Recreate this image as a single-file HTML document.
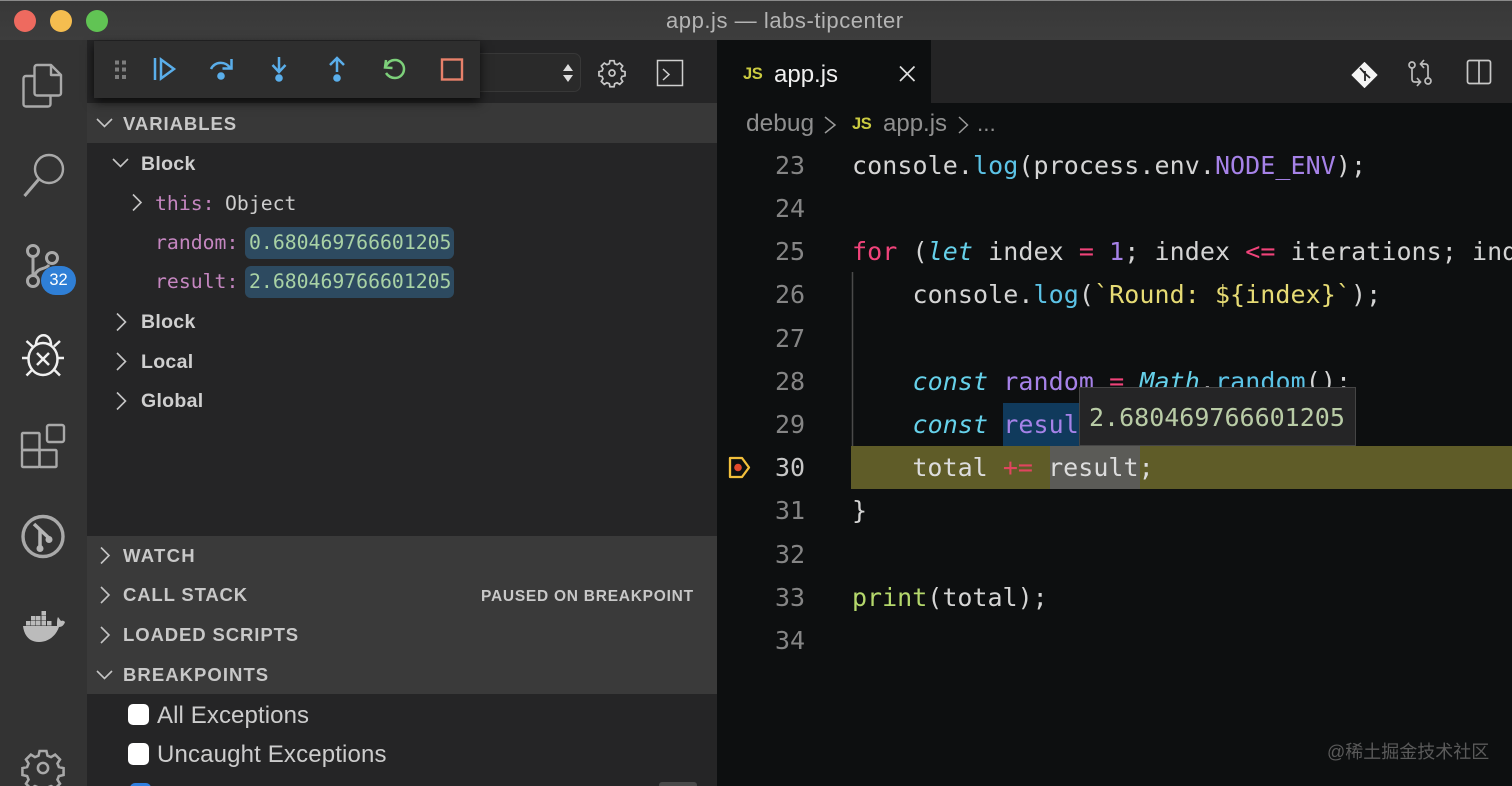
<!DOCTYPE html>
<html><head><meta charset="utf-8"><style>
html,body{margin:0;padding:0;width:1512px;height:786px;overflow:hidden;background:#0d0f10}
#w{position:relative;width:1512px;height:786px;overflow:hidden}
.a{position:absolute}
.u{position:absolute;font-family:"Liberation Sans",sans-serif;white-space:pre;line-height:24px}
.m{position:absolute;font-family:"DejaVu Sans Mono","Liberation Mono",monospace;white-space:pre}
.h{font-weight:bold;font-size:18.5px;color:#c8c8c8;letter-spacing:.95px}
.b{font-weight:bold;font-size:19.5px;color:#cfcfcf;letter-spacing:.3px}
.c{font-size:25px;line-height:43px;left:852px;color:#d4d4d4;letter-spacing:.07px}
.n{font-size:25px;line-height:43px;left:775px;color:#858585}
.v{font-size:19.8px;line-height:28px}
.pk{color:#c586c0}.hl{position:absolute;background:#2d4a60;border-radius:6px;width:209px;height:32px;left:245px}
.k{color:#f0437a}.cy{color:#66d1ea;font-style:italic}.f{color:#5cc3e6}.p{color:#a682e8}.y{color:#e6db74}.g{color:#b5d86c}
svg{position:absolute;overflow:visible}
</style></head><body><div id="w">
<div class="a" style="left:0;top:0;width:1512px;height:40px;background:linear-gradient(#383838,#3d3d3d);border-top:1px solid #8a8a8a;box-sizing:border-box"></div>
<div class="a" style="left:14px;top:10px;width:22px;height:22px;border-radius:50%;background:#ee6a5f"></div>
<div class="a" style="left:50px;top:10px;width:22px;height:22px;border-radius:50%;background:#f5bd4f"></div>
<div class="a" style="left:86px;top:10px;width:22px;height:22px;border-radius:50%;background:#61c454"></div>
<div class="u" style="left:666px;top:9px;font-size:22px;letter-spacing:.55px;color:#b4b4b4">app.js — labs-tipcenter</div>

<!-- activity bar -->
<div class="a" style="left:0;top:40px;width:87px;height:746px;background:#333"></div>
<!-- sidebar -->
<div class="a" style="left:87px;top:40px;width:630px;height:746px;background:#252526"></div>
<div class="a" style="left:87px;top:103px;width:630px;height:40px;background:#383838"></div>
<div class="a" style="left:87px;top:536px;width:630px;height:158px;background:#3a3a3a"></div>
<!-- select -->
<div class="a" style="left:400px;top:53px;width:181px;height:39px;box-sizing:border-box;border:1.5px solid #383838;border-radius:7px;background:#2a2a2a"></div>
<svg style="left:0;top:0" width="1512" height="786" fill="none">
 <path d="M563 71l5-7 5 7zM563 75l5 7 5-7z" fill="#ddd"/>
 <!-- sidebar gear -->
 <g transform="translate(612 73) scale(.82)" stroke="#c8c8c8" stroke-width="2.100">
  <circle r="3.600"/>
  <path d="M-2.500-15h5l.8 3.700 2.900 1.200 3.200-2 3.600 3.600-2 3.200 1.200 2.900 3.700.8v5l-3.700.8-1.200 2.900 2 3.200-3.600 3.600-3.200-2-2.900 1.200-.8 3.700h-5l-.8-3.700-2.900-1.200-3.200 2-3.600-3.600 2-3.200-1.200-2.900-3.700-.8v-5l3.700-.8 1.200-2.900-2-3.200 3.600-3.600 3.200 2 2.900-1.200z"/>
 </g>
 <rect x="657.500" y="60.500" width="25" height="25" stroke="#d0d0d0" stroke-width="1.500"/>
 <path d="M663 69l6 5.500-6 5.500" stroke="#d0d0d0" stroke-width="1.500"/>

 <!-- activity icons -->
 <g stroke="#a9a9a9" stroke-width="2.400" stroke-linejoin="round">
  <path d="M37 65h14l10 10v18c0 1.500-1 2.500-2.500 2.500H37c-1.500 0-2.500-1-2.500-2.500V67.500c0-1.500 1-2.500 2.500-2.500z"/><path d="M51 65v10h10"/>
  <path d="M34.500 76H26c-1.500 0-2.500 1-2.500 2.500v25.500c0 1.500 1 2.500 2.500 2.500h22c1.500 0 2.500-1 2.500-2.500V95.500"/>
  <circle cx="49" cy="169" r="14"/><path d="M39 179l-14.500 17" stroke-width="3"/>
  <g stroke-width="3"><circle cx="33" cy="251" r="5.500"/><circle cx="52" cy="258" r="5.500"/><circle cx="33" cy="281" r="5.500"/>
  <path d="M33 257v18M35 275c3-8 10-5 14-10"/></g>
  <rect x="22" y="433" width="17.500" height="17" rx="1"/><rect x="22" y="450" width="17.500" height="17" rx="1"/><rect x="39.500" y="450" width="17" height="17" rx="1"/><rect x="47" y="425" width="17" height="17" rx="2"/>
  <circle cx="43" cy="536.500" r="20" stroke-width="3.400"/>
 </g>
 <path d="M34 524l16 15" stroke="#b5b5b5" stroke-width="3.500"/><path d="M40 529v19" stroke="#b5b5b5" stroke-width="3.500"/><circle cx="49" cy="539.500" r="3.500" fill="#b5b5b5"/><circle cx="40" cy="548.500" r="3.500" fill="#b5b5b5"/>
 <!-- bug -->
 <g stroke="#f0f0f0" stroke-width="2.500">
  <path d="M36 345c0-13 15-13 15 0"/>
  <ellipse cx="43" cy="359" rx="14.500" ry="16"/>
  <path d="M37 353l12 12M49 353l-12 12"/>
  <path d="M22 358h7M57 358h7M26.500 341l6 5.500M60 341l-6 5.500M26.500 375.500l6-6M60 375.500l-6-6"/>
 </g>
 <!-- docker -->
 <g fill="#bbb">
  <path d="M23 626H57c0-4 0-7 1-9l3 4c2-1 3 0 4 1-1 3-3 5-6 5-3 9-11 15-20 15-10 0-15-7-16-16z"/>
  <rect x="26" y="621" width="4.500" height="4.500"/><rect x="31" y="621" width="4.500" height="4.500"/><rect x="36" y="621" width="4.500" height="4.500"/><rect x="41.500" y="621" width="4.500" height="4.500"/><rect x="47" y="621" width="4.500" height="4.500"/>
  <rect x="31" y="616" width="4.500" height="4.500"/><rect x="36" y="616" width="4.500" height="4.500"/><rect x="41.500" y="616" width="4.500" height="4.500"/><rect x="41.500" y="611" width="4.500" height="4.500"/>
 </g>
 <!-- gear bottom -->
 <g transform="translate(43 768) scale(.85)" stroke="#a9a9a9" stroke-width="3">
  <circle r="6"/>
  <path d="M-4-20h8l1.300 5.500 4.200 1.700 4.800-3 5.700 5.700-3 4.800 1.700 4.200 5.500 1.300v8l-5.500 1.300-1.700 4.200 3 4.800-5.700 5.700-4.800-3-4.200 1.700-1.300 5.500h-8l-1.300-5.500-4.200-1.700-4.800 3-5.700-5.700 3-4.800-1.700-4.200-5.500-1.300v-8l5.500-1.300 1.700-4.200-3-4.800 5.700-5.700 4.800 3 4.200-1.700z"/>
 </g>

 <!-- chevrons -->
 <g stroke="#c5c5c5" stroke-width="1.600">
  <path d="M97 119l7.500 7.500 7.500-7.500"/>
  <path d="M113 159l7.500 7.500 7.500-7.500"/>
  <path d="M133 194.500l8 8-8 8"/>
  <path d="M117 313.500l8.500 8.500-8.500 8.500"/>
  <path d="M117 353l8.500 8.500-8.500 8.500"/>
  <path d="M117 392.500l8.500 8.500-8.500 8.500"/>
  <path d="M101 547.500l8 8-8 8"/>
  <path d="M101 587l8 8-8 8"/>
  <path d="M101 627l8 8-8 8"/>
  <path d="M97 671l7.500 7.500 7.500-7.500"/>
 </g>
</svg>
<div class="a" style="left:41px;top:266px;width:35px;height:29px;border-radius:15px;background:#2f7fd6;color:#fff;font:16.500px/29px 'Liberation Sans',sans-serif;text-align:center">32</div>

<div class="u h" style="left:123px;top:112px">VARIABLES</div>
<div class="u b" style="left:141px;top:152px">Block</div>
<div class="m v" style="left:155px;top:190px"><span class="pk">this:</span></div>
<div class="m v" style="left:225px;top:190px;color:#ccc">Object</div>
<div class="hl" style="top:227px"></div><div class="hl" style="top:266px"></div>
<div class="m v" style="left:155px;top:229px"><span class="pk">random:</span></div>
<div class="m v" style="left:249px;top:229px;color:#a9d2a5">0.680469766601205</div>
<div class="m v" style="left:155px;top:268px"><span class="pk">result:</span></div>
<div class="m v" style="left:249px;top:268px;color:#a9d2a5">2.680469766601205</div>
<div class="u b" style="left:141px;top:310px">Block</div>
<div class="u b" style="left:141px;top:350px">Local</div>
<div class="u b" style="left:141px;top:389px">Global</div>
<div class="u h" style="left:123px;top:544px;letter-spacing:1.300px">WATCH</div>
<div class="u h" style="left:123px;top:583px;letter-spacing:.85px">CALL STACK</div>
<div class="u" style="left:481px;top:585px;font-size:15.500px;font-weight:bold;color:#c8c8c8;letter-spacing:.75px">PAUSED ON BREAKPOINT</div>
<div class="u h" style="left:123px;top:623px;letter-spacing:.9px">LOADED SCRIPTS</div>
<div class="u h" style="left:123px;top:663px;letter-spacing:1.050px">BREAKPOINTS</div>
<div class="a" style="left:128px;top:704px;width:21px;height:21px;background:#fff;border-radius:5px"></div>
<div class="u" style="left:157px;top:704px;font-size:24px;letter-spacing:.1px;color:#ccc">All Exceptions</div>
<div class="a" style="left:128px;top:743px;width:21px;height:22px;background:#fff;border-radius:5px"></div>
<div class="u" style="left:157px;top:743px;font-size:24px;letter-spacing:.15px;color:#ccc">Uncaught Exceptions</div>
<div class="a" style="left:130px;top:783px;width:21px;height:10px;background:#2f7fe0;border-radius:5px"></div>
<div class="a" style="left:659px;top:782px;width:38px;height:6px;background:#4a4a4a;border-radius:4px"></div>

<!-- debug toolbar -->
<div class="a" style="left:94px;top:41px;width:386px;height:57px;background:#2e2e2e;box-shadow:0 4px 10px rgba(0,0,0,.75)"></div>
<svg style="left:0;top:0" width="1512" height="786" fill="none">
 <g fill="#7e7e7e"><rect x="115" y="60.500" width="4" height="4"/><rect x="122" y="60.500" width="4" height="4"/><rect x="115" y="67.500" width="4" height="4"/><rect x="122" y="67.500" width="4" height="4"/><rect x="115" y="75" width="4" height="4"/><rect x="122" y="75" width="4" height="4"/></g>
 <g stroke="#5aaeea" stroke-width="2.500">
  <path d="M155 58v22"/><path d="M161 59.500l13 9.500-13 9.500z"/>
  <path d="M211 69c4-8 15-8 19-1"/><path d="M231.500 59v9.500h-9"/>
  <path d="M279 57v15M272.500 65l6.500 7 6.500-7"/>
  <path d="M337 72V58M330 65l7-7 7 7"/>
 </g>
 <g fill="#5aaeea"><circle cx="221" cy="76" r="3.800"/><circle cx="279" cy="78" r="3.800"/><circle cx="337" cy="78" r="3.800"/></g>
 <path d="M386 60l-1 7.500 7.500 .5M386 66c2-4 5-6 9-6 5 0 9 4 9 9s-4 9-9 9c-4 0-7-2-9-5" stroke="#7dd07a" stroke-width="2.500"/>
 <rect x="442" y="59.500" width="20" height="20" stroke="#e8816a" stroke-width="2.400"/>
</svg>

<!-- editor -->
<div class="a" style="left:717px;top:40px;width:795px;height:63px;background:#242425"></div>
<div class="a" style="left:717px;top:40px;width:214px;height:63px;background:#0d0f10"></div>
<div class="a" style="left:717px;top:103px;width:795px;height:683px;background:#0d0f10"></div>
<div class="u" style="left:743px;top:62px;font-size:16.500px;letter-spacing:-.4px;font-weight:bold;color:#cbcb41">JS</div>
<div class="u" style="left:774px;top:63px;font-size:24px;color:#f0f0f0">app.js</div>
<svg style="left:0;top:0" width="1512" height="786" fill="none">
 <path d="M900 66.500l14.500 14.500M914.500 66.500L900 81" stroke="#e0e0e0" stroke-width="1.700"/>
 <!-- git diamond -->
 <path d="M1364.500 62.500l12.500 12.500-12.500 12.500-12.500-12.500z" fill="#f4f4f4" stroke="#f4f4f4" stroke-width="1" stroke-linejoin="round"/>
 <path d="M1360 68l5 5.500M1365 71v10M1365 73.500l5 4.500" stroke="#252526" stroke-width="1.800"/>
 <!-- pr -->
 <g stroke="#bdbdbd" stroke-width="1.700">
  <circle cx="1412" cy="65" r="3"/><circle cx="1428" cy="81" r="3"/>
  <path d="M1412 68v11c0 2 1 3 3 3h5M1417 78l3.500 4-3.500 4"/>
  <path d="M1428 78V67c0-2-1-3-3-3h-4M1424 60l-3.500 4 3.500 4"/>
  <rect x="1467.500" y="60.500" width="23" height="23" rx="2" stroke="#c8c8c8"/><path d="M1479 60.500v23" stroke="#c8c8c8"/>
 </g>
 <!-- breadcrumb chevrons -->
 <path d="M825 117l10 8-10 8M959 117l8.500 8-8.500 8" stroke="#9a9a9a" stroke-width="1.500"/>
 <path d="M852.500 272v174" stroke="#4a4a4a" stroke-width="1.500"/>
 <!-- breakpoint icon -->
 <path d="M730 458h12l7 9.500-7 9.500h-12z" stroke="#f2bf3b" stroke-width="2.300" stroke-linejoin="round"/>
 <circle cx="738" cy="467.500" r="3.800" fill="#e2492c"/>
</svg>
<div class="u" style="left:746px;top:112px;font-size:24.500px;color:#8f8f8f">debug</div>
<div class="u" style="left:852px;top:112px;font-size:16.500px;letter-spacing:-.4px;font-weight:bold;color:#cbcb41">JS</div>
<div class="u" style="left:883px;top:112px;font-size:24px;color:#8f8f8f">app.js</div>
<div class="u" style="left:977px;top:112px;font-size:22.500px;color:#8f8f8f">...</div>

<!-- highlights -->
<div class="a" style="left:851px;top:446px;width:661px;height:43px;background:#5f5c28"></div>
<div class="a" style="left:1050px;top:446px;width:90px;height:43px;background:#5b5b57"></div>
<div class="a" style="left:1003px;top:403px;width:76px;height:43px;background:#103a5c"></div>

<div class="m n" style="top:144px">23</div>
<div class="m n" style="top:187px">24</div>
<div class="m n" style="top:230px">25</div>
<div class="m n" style="top:273px">26</div>
<div class="m n" style="top:317px">27</div>
<div class="m n" style="top:360px">28</div>
<div class="m n" style="top:403px">29</div>
<div class="m n" style="top:446px;color:#c6c6c6">30</div>
<div class="m n" style="top:489px">31</div>
<div class="m n" style="top:533px">32</div>
<div class="m n" style="top:576px">33</div>
<div class="m n" style="top:619px">34</div>

<div class="m c" style="top:144px">console.<span class="f">log</span>(process.env.<span class="p">NODE_ENV</span>);</div>
<div class="m c" style="top:230px"><span class="k">for</span> (<span class="cy">let</span> index <span class="k">=</span> <span class="p">1</span>; index <span class="k">&lt;=</span> iterations; index</div>
<div class="m c" style="top:273px">    console.<span class="f">log</span>(<span class="y">`Round: ${index}`</span>);</div>
<div class="m c" style="top:360px">    <span class="cy">const</span> <span class="p">random</span> <span class="k">=</span> <span class="cy">Math</span>.<span class="f">random</span>();</div>
<div class="m c" style="top:403px">    <span class="cy">const</span> <span class="p">result</span> <span class="k">=</span> <span class="p">2</span> <span class="k">+</span> random);</div>
<div class="m c" style="top:446px;color:#dcdcdc;letter-spacing:.03px">    total <span style="color:#e0455f">+=</span> result;</div>
<div class="m c" style="top:489px">}</div>
<div class="m c" style="top:576px;letter-spacing:0"><span class="g">print</span>(total);</div>

<!-- tooltip -->
<div class="a" style="left:1079px;top:387px;width:277px;height:59px;box-sizing:border-box;background:#252526;border:1px solid #454545"></div>
<div class="m" style="left:1089px;top:396px;font-size:25px;line-height:43px;color:#b9cca6">2.680469766601205</div>

<div class="u" style="left:1327px;top:740px;font-family:'Liberation Sans','Noto Sans CJK SC',sans-serif;font-size:18px;color:#5a5a5a">@稀土掘金技术社区</div>
</div></body></html>
